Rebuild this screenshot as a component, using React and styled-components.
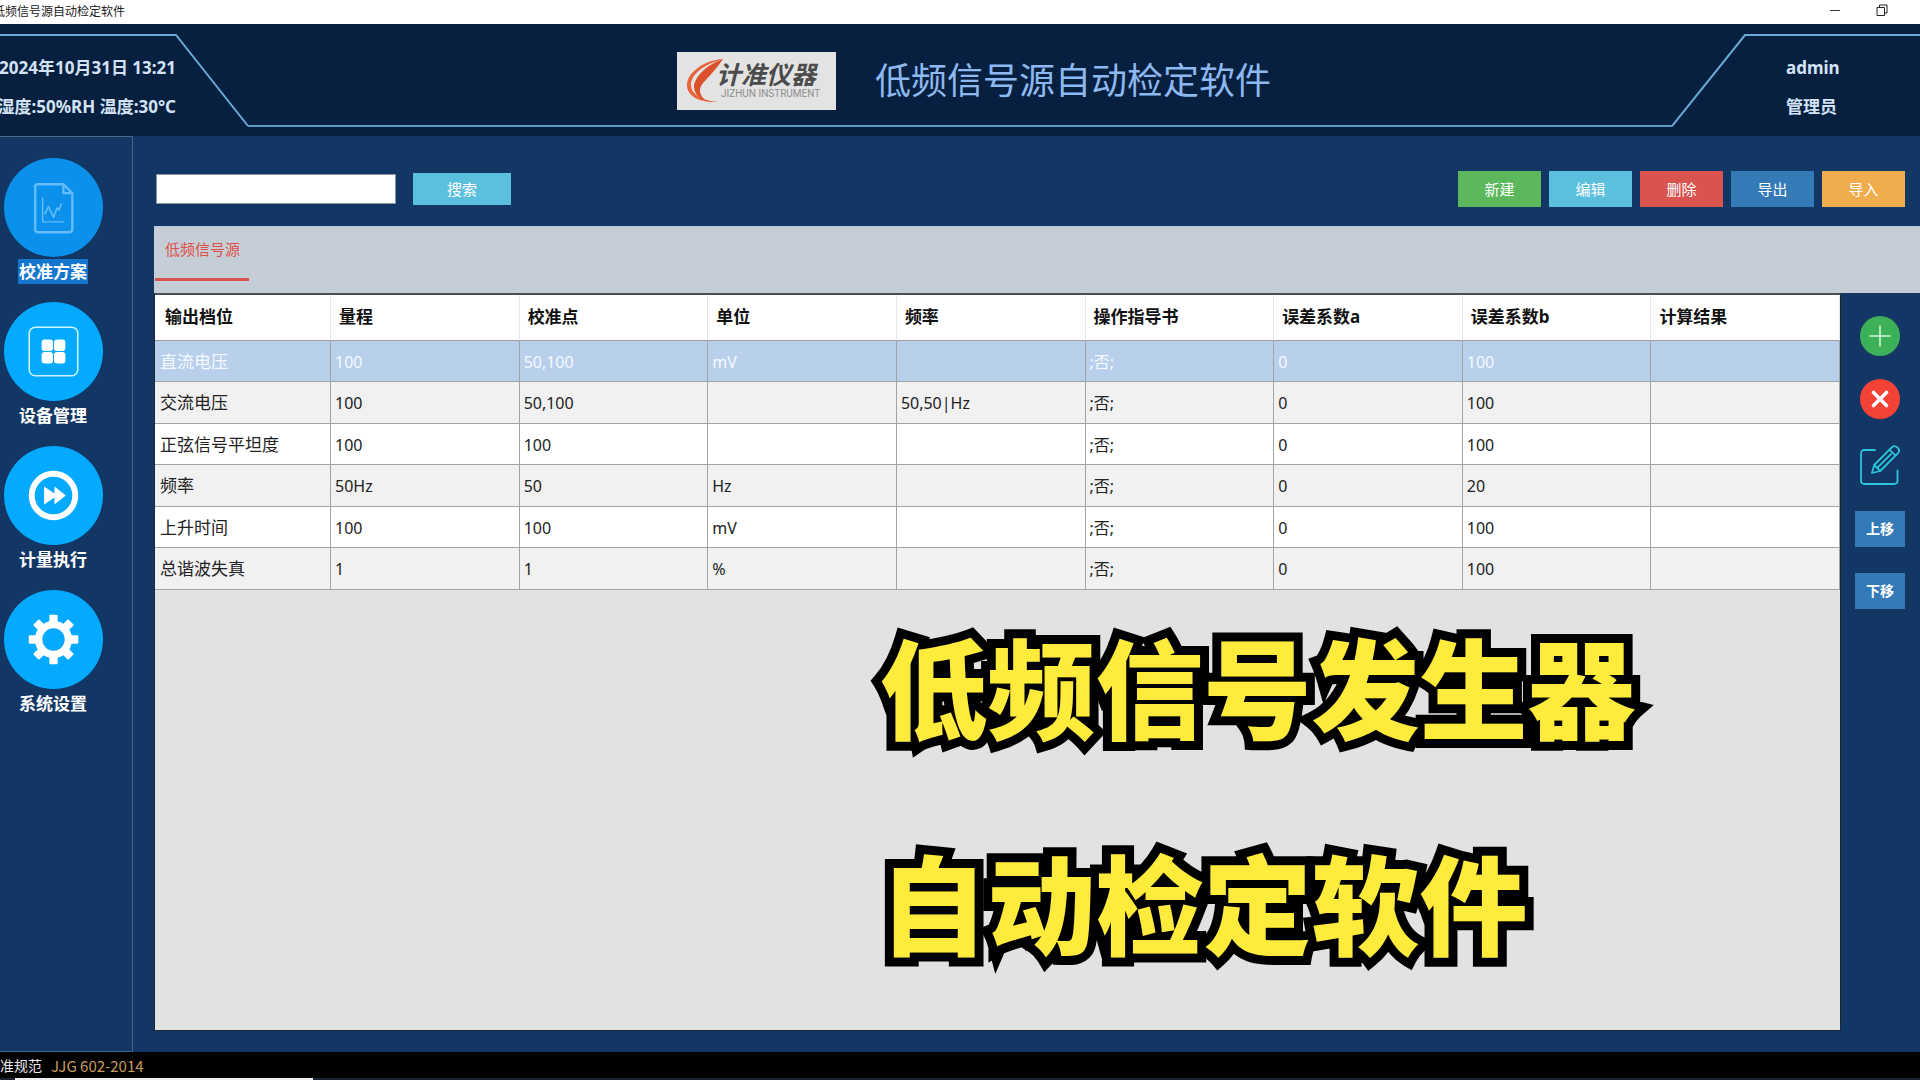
import styled, { createGlobalStyle } from "styled-components";

const navItems = [
    { label: "校准方案", icon: <PlanIcon />, active: true },
    { label: "设备管理", icon: <DeviceIcon /> },
    { label: "计量执行", icon: <RunIcon /> },
    { label: "系统设置", icon: <GearIcon /> },
];

const actions = [
    { label: "新建", color: "#5cb85c" },
    { label: "编辑", color: "#5bc0de" },
    { label: "删除", color: "#d9534f" },
    { label: "导出", color: "#337ab7" },
    { label: "导入", color: "#f0ad4e" },
];

const columns = ["输出档位", "量程", "校准点", "单位", "频率", "操作指导书", "误差系数a", "误差系数b", "计算结果"];

const rows = [
    ["直流电压", "100", "50,100", "mV", "", ";否;", "0", "100", ""],
    ["交流电压", "100", "50,100", "", "50,50|Hz", ";否;", "0", "100", ""],
    ["正弦信号平坦度", "100", "100", "", "", ";否;", "0", "100", ""],
    ["频率", "50Hz", "50", "Hz", "", ";否;", "0", "20", ""],
    ["上升时间", "100", "100", "mV", "", ";否;", "0", "100", ""],
    ["总谐波失真", "1", "1", "%", "", ";否;", "0", "100", ""],
];

export default function App() {
    return (
        <Page>
            <GlobalStyle />

            <TitleBar>
                <WindowTitle>低频信号源自动检定软件</WindowTitle>
                <WindowButtons>
                    <WindowButton aria-label="最小化">
                        <svg width="12" height="12" viewBox="0 0 12 12" stroke="#333" fill="none">
                            <path d="M1 6.5h10" />
                        </svg>
                    </WindowButton>
                    <WindowButton aria-label="还原">
                        <svg width="12" height="12" viewBox="0 0 12 12" stroke="#222" fill="none">
                            <path d="M1 3.5h7.5v8H1zM3.5 3.5v-2.5h7.5v8H8.5" />
                        </svg>
                    </WindowButton>
                </WindowButtons>
            </TitleBar>

            <Header>
                <HeaderSide>
                    <Frame width="248" height="112" viewBox="0 0 248 112">
                        <path d="M0 11H176L248 102" />
                    </Frame>
                    <Status>
                        <p>2024年10月31日 13:21</p>
                        <p>湿度:50%RH 温度:30°C</p>
                    </Status>
                </HeaderSide>
                <Brand>
                    <Logo>
                        <LogoMark viewBox="0 0 38 46">
                            <path d="M37 1C18 2 1 15 1 27C1 38 13 45 33 44C18 43 5 37 5 27C5 17 16 7 37 1Z" fill="#e8623a" />
                            <path d="M37 1C22 6 9 18 8 28C8 35 12 40 20 43C13 37 12 31 17 25C24 17 31 10 37 1Z" fill="#dc5029" />
                        </LogoMark>
                        <LogoText>
                            <LogoName>计准仪器</LogoName>
                            <LogoSub>JIZHUN INSTRUMENT</LogoSub>
                        </LogoText>
                    </Logo>
                    <Title>低频信号源自动检定软件</Title>
                </Brand>
                <HeaderSide>
                    <Frame width="248" height="112" viewBox="0 0 248 112">
                        <path d="M0 102L73 11H248" />
                    </Frame>
                    <User>
                        <p>admin</p>
                        <p>管理员</p>
                    </User>
                </HeaderSide>
            </Header>

            <Body>
                <Sidebar>
                    {navItems.map((item) => (
                        <NavItem href="#" key={item.label}>
                            <NavCircle $active={item.active}>{item.icon}</NavCircle>
                            <NavLabel $active={item.active}>{item.label}</NavLabel>
                        </NavItem>
                    ))}
                </Sidebar>

                <Main>
                    <Toolbar>
                        <SearchInput type="text" aria-label="搜索" />
                        <SearchButton>搜索</SearchButton>
                        <Actions>
                            {actions.map((action) => (
                                <ActionButton key={action.label} $color={action.color}>{action.label}</ActionButton>
                            ))}
                        </Actions>
                    </Toolbar>

                    <Tabs>
                        <Tab>低频信号源</Tab>
                    </Tabs>

                    <Content>
                        <Panel>
                            <Table>
                                <thead>
                                    <tr>
                                        {columns.map((name) => <Th key={name}>{name}</Th>)}
                                    </tr>
                                </thead>
                                <tbody>
                                    {rows.map((row, i) => (
                                        <Row key={row[0]} $selected={i === 0}>
                                            {row.map((value, j) => <Td key={columns[j]}>{value}</Td>)}
                                        </Row>
                                    ))}
                                </tbody>
                            </Table>
                            <Caption>
                                <p>低频信号发生器</p>
                                <p>自动检定软件</p>
                            </Caption>
                        </Panel>

                        <Rail>
                            <IconButton aria-label="添加">
                                <svg width="40" height="40" viewBox="0 0 40 40">
                                    <circle cx="20" cy="20" r="20" fill="#3db157" />
                                    <path d="M20 9.5v21M9.5 20h21" stroke="#d4f5dc" strokeWidth="1.6" />
                                </svg>
                            </IconButton>
                            <IconButton aria-label="移除">
                                <svg width="40" height="40" viewBox="0 0 40 40">
                                    <circle cx="20" cy="20" r="20" fill="#f44336" />
                                    <path d="M13.5 13.5l13 13M26.5 13.5l-13 13" stroke="#fff" strokeWidth="3.6" strokeLinecap="round" />
                                </svg>
                            </IconButton>
                            <IconButton aria-label="修改" $tall>
                                <svg width="40" height="40" viewBox="0 0 40 40" fill="none" stroke="#2bc6dc" strokeWidth="1.8" strokeLinecap="round" strokeLinejoin="round">
                                    <path d="M15 5H4.5Q1 5 1 8.5V35.5Q1 39 4.5 39H34Q37.5 39 37.5 35.5V25.5" />
                                    <path d="M12 28L14.2 20L32 2.2Q34.5 0 37.5 2.5Q40.5 5.3 38 8.2L20.2 26ZM14.2 20L20.2 26M29.5 4.7L35.5 10.7M17.5 22.7L31 9.2" />
                                </svg>
                            </IconButton>
                            <MoveGroup>
                                <MoveButton>上移</MoveButton>
                                <MoveButton>下移</MoveButton>
                            </MoveGroup>
                        </Rail>
                    </Content>
                </Main>
            </Body>

            <Footer>
                <span>准规范</span>
                <Standard>JJG 602-2014</Standard>
            </Footer>
            <Taskbar />
        </Page>
    );
}

function PlanIcon() {
    return (
        <svg viewBox="0 0 100 100" fill="none" stroke="#62bdf9" strokeWidth="2.4" strokeLinejoin="round">
            <path d="M34 26.5H60L69 35.5V72Q69 75 66 75H34Q31.5 75 31.5 72V29Q31.5 26.5 34 26.5Z" />
            <path d="M60 26.5V35.5H69" />
            <path d="M39 40V64.5H61" strokeWidth="1.4" />
            <path d="M41 57L45 49L50 60L53.5 50.5L55.5 52.5L58 46" strokeWidth="1.6" />
        </svg>
    );
}

function DeviceIcon() {
    return (
        <svg viewBox="0 0 100 100" fill="#fff">
            <rect x="25.5" y="25.5" width="49" height="49" rx="6" fill="none" stroke="#c9f3ff" strokeWidth="1.6" />
            <rect x="38" y="38" width="11.5" height="11.5" rx="3" />
            <rect x="50.5" y="38" width="11.5" height="11.5" rx="3" />
            <rect x="38" y="50.5" width="11.5" height="11.5" rx="3" />
            <rect x="50.5" y="50.5" width="11.5" height="11.5" rx="3" />
        </svg>
    );
}

function RunIcon() {
    return (
        <svg viewBox="0 0 100 100" fill="#fff">
            <circle cx="50" cy="50" r="22" fill="none" stroke="#fff" strokeWidth="6" />
            <path d="M40.5 41L51 48V41L62.5 50L51 59V52L40.5 59Z" />
        </svg>
    );
}

function GearIcon() {
    return (
        <svg viewBox="0 0 100 100" fill="#fff">
            <circle cx="50" cy="50" r="15" fill="none" stroke="#fff" strokeWidth="7.5" />
            {[0, 45, 90, 135, 180, 225, 270, 315].map((angle) => (
                <rect key={angle} x="45.8" y="25" width="8.4" height="9" rx="1" transform={`rotate(${angle} 50 50)`} />
            ))}
        </svg>
    );
}

const GlobalStyle = createGlobalStyle`
    * {
        box-sizing: border-box;
    }
    body {
        margin: 0;
        background: #133765;
        font-family: "Noto Sans", "Noto Sans CJK SC", sans-serif;
        font-size: 16px;
    }
    p, h1 {
        margin: 0;
    }
    button {
        border: 0;
        padding: 0;
        font-family: inherit;
        cursor: pointer;
    }
`;

const Page = styled.div`
    display: flex;
    flex-direction: column;
    min-height: 100vh;
    overflow: hidden;
`;
const TitleBar = styled.div`
    display: flex;
    justify-content: space-between;
    height: 24px;
    background: #fff;
`;
const WindowTitle = styled.span`
    margin-left: -7px;
    font-size: 12px;
    line-height: 24px;
    color: #222;
`;
const WindowButtons = styled.div`
    display: flex;
    align-items: flex-start;
    padding-right: 15px;
`;
const WindowButton = styled.button`
    width: 47px;
    height: 20px;
    background: none;

    svg{
        display: block;
        margin: 0 auto;
    }
`;

const Header = styled.header`
    display: flex;
    height: 112px;
    background: #08203f;
`;
const HeaderSide = styled.div`
    position: relative;
    flex: none;
    width: 248px;
    padding-top: 24px;
    font-size: 17px;
    font-weight: 700;
    line-height: 39px;
    color: #d3e3f5;
`;
const Frame = styled.svg`
    position: absolute;
    top: 0;
    left: 0;
    fill: none;
    stroke: #69a9d2;
    stroke-width: 2px;
`;
const Status = styled.div`
    display: flex;
    flex-direction: column;
    align-items: flex-end;
    width: 176px;
    white-space: nowrap;
`;
const User = styled.div`
    padding-left: 114px;
`;
const Brand = styled.div`
    display: flex;
    flex: 1;
    align-items: center;
    justify-content: center;
    gap: 39px;
    height: 103px;
    padding: 13px 0 0 28px;
    border-bottom: 2px solid #5b9cc6;
`;
const Logo = styled.div`
    display: flex;
    align-items: center;
    width: 159px;
    height: 58px;
    padding-left: 9px;
    background: #e3e3e3;
`;
const LogoMark = styled.svg`
    flex: none;
    width: 38px;
    height: 46px;
`;
const LogoText = styled.div`
    display: flex;
    flex-direction: column;
    margin-left: -8px;
    white-space: nowrap;
`;
const LogoName = styled.span`
    font-size: 25px;
    font-style: italic;
    font-weight: 700;
    line-height: 25px;
    color: #4c4c4c;
`;
const LogoSub = styled.span`
    padding-left: 5px;
    font-family: Roboto, "Liberation Sans", sans-serif;
    font-size: 10px;
    line-height: 14px;
    color: #8e8e8e;
`;
const Title = styled.h1`
    font-size: 36px;
    font-weight: 400;
    line-height: 48px;
    color: #8db8f0;
`;

const Body = styled.div`
    display: flex;
    flex: 1;
`;
const Sidebar = styled.nav`
    display: flex;
    flex: none;
    flex-direction: column;
    gap: 18px;
    width: 133px;
    padding: 21px 26px 20px 0;
    border: 1px solid #466a86;
    border-left: 0;
`;
const NavItem = styled.a`
    display: flex;
    flex-direction: column;
    align-items: center;
    gap: 2px;
    text-decoration: none;
`;
const NavCircle = styled.span`
    width: 99px;
    height: 99px;
    border-radius: 50%;
    background: ${(props) => (props.$active ? "#0b91ec" : "#03aaff")};

    svg{
        display: block;
    }
`;
const NavLabel = styled.span`
    padding: 0 1px;
    font-size: 17px;
    font-weight: 700;
    line-height: 25px;
    color: #fff;
    background: ${(props) => (props.$active ? "#1475cf" : "none")};
`;

const Main = styled.main`
    display: flex;
    flex: 1;
    flex-direction: column;
    padding: 0 0 21px 21px;
`;
const Toolbar = styled.div`
    display: flex;
    align-items: center;
    height: 90px;
    padding: 16px 15px 0 2px;
`;
const SearchInput = styled.input`
    width: 240px;
    height: 30px;
    padding: 0 6px;
    border: 1px solid #8a93a0;
    background: #fff;
    font-size: 15px;
`;
const ActionButton = styled.button`
    width: 83px;
    height: 36px;
    padding-bottom: 2px;
    font-size: 15px;
    color: #fff;
    background: ${(props) => props.$color};
`;
const SearchButton = styled(ActionButton)`
    width: 98px;
    height: 32px;
    margin-left: 17px;
    background: #5bc0de;
`;
const Actions = styled.div`
    display: flex;
    gap: 8px;
    margin-left: auto;
`;
const Tabs = styled.div`
    height: 67px;
    padding-left: 1px;
    border-top: 1px solid #b4c9e4;
    background: #c5ced7;
`;
const Tab = styled.button`
    height: 54px;
    padding: 0 9px 8px 10px;
    border-bottom: 3px solid #d9534f;
    background: none;
    font-size: 15px;
    color: #e0504b;
`;

const Content = styled.div`
    display: flex;
    flex: 1;
`;
const Panel = styled.section`
    position: relative;
    flex: 1;
    border: 1px solid #1d2633;
    border-top: 2px solid #4a4f57;
    background: #e2e2e2;
`;
const Table = styled.table`
    width: 100%;
    table-layout: fixed;
    border-spacing: 0;
`;
const Th = styled.th`
    height: 46px;
    padding: 0 0 2px 8px;
    border-right: 1px solid #e4e6e8;
    border-bottom: 1px solid #9c9c9c;
    background: #fff;
    font-size: 17px;
    font-weight: 700;
    line-height: 24px;
    text-align: left;
    color: #111;

    &:first-child {
        width: 176px;
        padding-left: 10px;
    }
`;
const Td = styled.td`
    height: 41px;
    padding: 1px 0 0 4px;
    border-right: 1px solid #a3a3a3;
    border-bottom: 1px solid #a3a3a3;
    line-height: 24px;

    &:first-child {
        padding-left: 5px;
        font-size: 17px;
    }
`;
const Row = styled.tr`
    color: ${(props) => (props.$selected ? "#f4f9ff" : "#222")};
    background: ${(props) => (props.$selected ? "#b8d0eb" : "#fff")};

    &:nth-child(even) {
        background: #f1f1f1;
    }
    &:nth-child(even) ${Td} {
        height: 42px;
    }
`;
const Caption = styled.div`
    position: absolute;
    top: 287px;
    left: 43%;
    font-size: 108px;
    font-weight: 900;
    line-height: 216px;
    white-space: nowrap;
    color: #ffeb3b;
    -webkit-text-stroke: 18px #000;
    paint-order: stroke fill;
    pointer-events: none;
`;

const Rail = styled.aside`
    display: flex;
    flex: none;
    flex-direction: column;
    align-items: center;
    gap: 23px;
    width: 79px;
    padding: 23px 1px 0 0;
`;
const IconButton = styled.button`
    width: 40px;
    height: ${(props) => (props.$tall ? "46px" : "40px")};
    background: none;

    svg{
        display: block;
    }
`;
const MoveGroup = styled.div`
    display: flex;
    flex-direction: column;
    gap: 26px;
`;
const MoveButton = styled(ActionButton)`
    width: 50px;
    font-weight: 700;
    font-size: 14px;
    background: #337ab7;
`;

const Footer = styled.footer`
    display: flex;
    align-items: center;
    gap: 9px;
    height: 26px;
    background: #000;
    font-size: 14px;
    color: #e8e8e8;
`;
const Standard = styled.span`
    font-family: "Noto Sans CJK SC", sans-serif;
    font-size: 15px;
    color: #c99c62;
`;
const Taskbar = styled.div`
    height: 2px;
    padding-left: 15px;
    background: #1c2333;

    &::before {
        content: "";
        display: block;
        width: 298px;
        height: 2px;
        background: #efefef;
    }
`;
